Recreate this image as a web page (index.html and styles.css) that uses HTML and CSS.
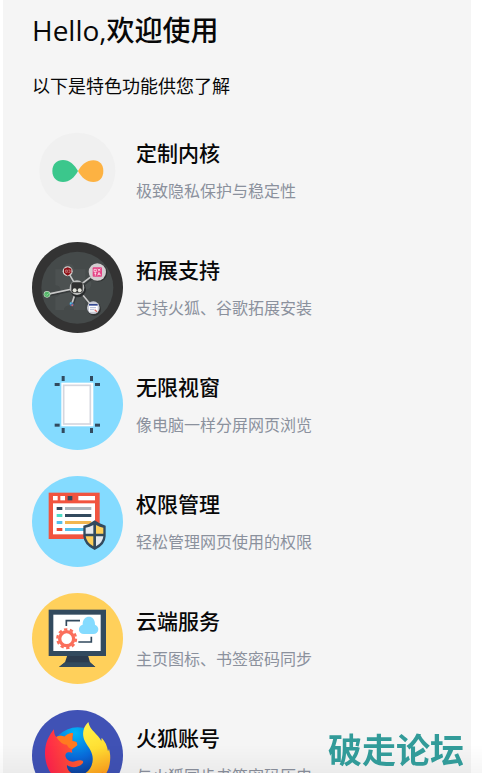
FILE: index.html
```html
<!DOCTYPE html>
<html lang="zh-CN">
<head>
  <meta charset="UTF-8">
  <meta name="viewport" content="width=device-width, initial-scale=1">
  <title>欢迎使用</title>
  <link rel="stylesheet" href="styles.css">
</head>
<body>

<main class="page">
  <h1>Hello,欢迎使用</h1>
  <p class="intro">以下是特色功能供您了解</p>

  <ul class="features">
    <!-- Kernel -->
    <li class="feature">
      <svg class="icon" viewBox="0 0 273 273" aria-hidden="true">
        <circle cx="136" cy="137" r="114" fill="#f0f0f0"/>
        <path d="M138 138C127 158 112 171 93 171C74 171 61 158 61 138C61 118 74 105 93 105C112 105 127 119 138 138Z" fill="#3bc78c"/>
        <path d="M138 138C149 119 164 106 184 106C203 106 214 119 214 138C214 158 203 171 184 171C164 171 149 158 138 138Z" fill="#fdb242"/>
      </svg>
      <div class="text">
        <h2>定制内核</h2>
        <p>极致隐私保护与稳定性</p>
      </div>
    </li>

    <!-- Extensions -->
    <li class="feature">
      <svg class="icon" viewBox="0 0 273 273" aria-hidden="true">
        <circle cx="136.500" cy="136.500" r="136.500" fill="#333"/>
        <circle cx="136" cy="137" r="108" fill="#454a4a"/>
        <path d="M70 82H94C94 60 126 60 126 82H160V113C184 104 184 147 160 141V204H126C126 186 96 186 96 204H70V165C92 165 92 130 70 130Z" fill="#4c5151"/>
        <g stroke="#292c2d" stroke-width="5" opacity=".6">
          <path d="M139 142L109 94M139 142L199 94M139 142L49 161M139 142L122 192M139 142L187 202"/>
        </g>
        <g stroke="#c8c8c8" stroke-width="5">
          <path d="M135 136L107 88M135 136L197 89M135 138L45 157M135 138L119 187M135 138L184 197"/>
        </g>
        <circle cx="138" cy="142" r="24" fill="#292c2d"/>
        <circle cx="135" cy="137" r="22" fill="#bfc0bf"/>
        <rect x="118" y="121" width="34" height="31" rx="5" fill="#303030"/>
        <circle cx="128" cy="145" r="6" fill="#e3e4dc"/>
        <circle cx="143" cy="145" r="6" fill="#e3e4dc"/>
        <circle cx="107" cy="88" r="15" fill="#d1cecd"/>
        <path d="M107 76L118 80V91Q116 97 107 101Q98 97 96 91V80Z" fill="#8e1016"/>
        <path d="M101 84V91H106V84ZM109 84H114V91H109" fill="none" stroke="#d9a0a0" stroke-width="2"/>
        <circle cx="199" cy="92" r="27" fill="#303333"/>
        <circle cx="196" cy="90" r="26" fill="#d3cdd0"/>
        <rect x="182" y="76" width="28" height="28" rx="3" fill="#e54385"/>
        <path d="M186 82H193V89H186V82M197 81L205 86M205 80L198 88M187 94H193M190 91V101M197 100L201 91L206 100M198 97H204" fill="none" stroke="#fff" stroke-width="2"/>
        <circle cx="45" cy="157" r="10" fill="#c3dcc5"/>
        <circle cx="45" cy="157" r="8" fill="#52b467"/>
        <path d="M41 157L44 160L50 154" fill="none" stroke="#a7deb2" stroke-width="2"/>
        <circle cx="119" cy="187" r="6" fill="#4a6ea6"/>
        <circle cx="116" cy="184" r="3" fill="#53c6dd"/>
        <circle cx="121" cy="190" r="3" fill="#c56b70"/>
        <circle cx="187" cy="201" r="20" fill="#303333"/>
        <circle cx="184" cy="197" r="19" fill="#c9cbd5"/>
        <rect x="171" y="186" width="26" height="23" fill="#fff"/>
        <path d="M171 186H197V191H171Z" fill="#344993"/>
        <path d="M174 197H192M174 203H187" stroke="#8792bd" stroke-width="2"/>
        <path d="M188 203L195 209" stroke="#df6a65" stroke-width="4"/>
      </svg>
      <div class="text">
        <h2>拓展支持</h2>
        <p>支持火狐、谷歌拓展安装</p>
      </div>
    </li>

    <!-- Windows -->
    <li class="feature">
      <svg class="icon" viewBox="0 0 273 273" aria-hidden="true">
        <circle cx="136.500" cy="136.500" r="136.500" fill="#84dbff"/>
        <g fill="#324a5e">
          <rect x="89" y="51" width="9" height="15"/>
          <rect x="174" y="51" width="9" height="15"/>
          <rect x="68" y="72" width="15" height="9"/>
          <rect x="189" y="72" width="15" height="9"/>
          <rect x="68" y="194" width="15" height="9"/>
          <rect x="189" y="194" width="15" height="9"/>
          <rect x="89" y="207" width="9" height="15"/>
          <rect x="174" y="207" width="9" height="15"/>
        </g>
        <rect x="88" y="71" width="96" height="131" fill="#fff"/>
        <rect x="95" y="79" width="80" height="116" fill="#fff" stroke="#d5d7df" stroke-width="5"/>
      </svg>
      <div class="text">
        <h2>无限视窗</h2>
        <p>像电脑一样分屏网页浏览</p>
      </div>
    </li>

    <!-- Permissions -->
    <li class="feature">
      <svg class="icon" viewBox="0 0 273 273" aria-hidden="true">
        <circle cx="136.500" cy="136.500" r="136.500" fill="#84dbff"/>
        <rect x="50" y="50" width="153" height="139" fill="#f1543f"/>
        <rect x="63" y="82" width="126" height="93" fill="#fff"/>
        <g fill="#fff">
          <rect x="63" y="60" width="14" height="13"/>
          <rect x="85" y="60" width="14" height="13"/>
          <rect x="139" y="60" width="50" height="13"/>
        </g>
        <rect x="107" y="60" width="14" height="13" fill="#324a5e"/>
        <rect x="74" y="93" width="17" height="9" fill="#324a5e"/>
        <rect x="99" y="93" width="79" height="9" fill="#acb3ba"/>
        <rect x="74" y="114" width="17" height="9" fill="#4cdbc4"/>
        <rect x="99" y="114" width="79" height="9" fill="#324a5e"/>
        <rect x="74" y="135" width="17" height="9" fill="#54c0eb"/>
        <rect x="99" y="135" width="79" height="9" fill="#f2b650"/>
        <rect x="74" y="156" width="17" height="9" fill="#e94b35"/>
        <rect x="99" y="156" width="79" height="9" fill="#54c0eb"/>
        <path d="M188 133Q202 144 221 149V181Q220 208 188 222Q156 208 154 181V149Q174 145 188 133Z" fill="#324a5e"/>
        <path d="M184 147V173H161V155Q173 153 184 147Z" fill="#e6e9ee"/>
        <path d="M192 147Q203 153 214 155V173H192Z" fill="#ffd05b"/>
        <path d="M161 181H184V211Q164 201 161 181Z" fill="#ffd05b"/>
        <path d="M192 181H214Q212 201 192 211Z" fill="#e6e9ee"/>
      </svg>
      <div class="text">
        <h2>权限管理</h2>
        <p>轻松管理网页使用的权限</p>
      </div>
    </li>

    <!-- Cloud -->
    <li class="feature">
      <svg class="icon" viewBox="0 0 273 273" aria-hidden="true">
        <circle cx="136.500" cy="136.500" r="136.500" fill="#ffd05b"/>
        <path d="M106 187H168L174 208L190 222H81L99 208Z" fill="#2b3b4e"/>
        <path d="M99 208H174L190 222H81Z" fill="#324a5e"/>
        <rect x="50" y="50" width="172" height="139" fill="#324a5e"/>
        <rect x="64" y="65" width="142" height="109" fill="#fff"/>
        <path d="M103 99V83H144M139 147H178V131" fill="none" stroke="#324a5e" stroke-width="5"/>
        <circle cx="104" cy="137" r="21" fill="none" stroke="#fb6e5b" stroke-width="10"/>
        <circle cx="104" cy="137" r="28" fill="none" stroke="#fb6e5b" stroke-width="7" stroke-dasharray="10 7.593"/>
        <path d="M156 123C137 123 136 99 152 95C151 64 190 63 189 95C204 100 202 123 184 123Z" fill="#84dbff"/>
      </svg>
      <div class="text">
        <h2>云端服务</h2>
        <p>主页图标、书签密码同步</p>
      </div>
    </li>

    <!-- Firefox account -->
    <li class="feature">
      <svg class="icon" viewBox="0 0 273 273" aria-hidden="true">
        <defs>
          <radialGradient id="globe" cx="45%" cy="10%" r="95%">
            <stop offset="0" stop-color="#00b7f8"/>
            <stop offset=".5" stop-color="#0968da"/>
            <stop offset="1" stop-color="#13256e"/>
          </radialGradient>
          <linearGradient id="fox" x1="0" y1=".3" x2="1" y2=".1">
            <stop offset="0" stop-color="#ff254c"/>
            <stop offset=".5" stop-color="#ff5931"/>
            <stop offset="1" stop-color="#ffa318"/>
          </linearGradient>
          <linearGradient id="tail" x1=".3" y1="0" x2=".5" y2="1">
            <stop offset="0" stop-color="#fff44b"/>
            <stop offset=".45" stop-color="#ffdf33"/>
            <stop offset="1" stop-color="#ff8a16"/>
          </linearGradient>
        </defs>
        <circle cx="136.500" cy="136.500" r="136.500" fill="#4052b5"/>
        <circle cx="137" cy="134" r="82" fill="url(#globe)"/>
        <path d="M169 36C151 53 149 77 160 96C171 115 184 128 182 151C180 182 155 196 130 203L142 231C190 233 227 201 233 162C236 143 235 131 231 117L228 124C226 107 219 94 209 83L208 93C198 72 174 62 169 36Z" fill="url(#tail)"/>
        <path d="M66 58C51 76 39 98 39 130C39 187 80 231 136 231C176 231 205 211 215 184C190 202 154 209 125 193C111 186 103 175 105 165C116 174 137 174 150 162C157 156 153 150 143 151C130 152 123 160 109 151C98 144 97 130 108 127C114 126 119 127 121 129C119 121 120 117 125 114L136 105L133 96L121 93L123 69C112 70 103 75 97 80C88 76 80 77 73 81C67 76 66 67 66 58Z" fill="url(#fox)"/>
        <path d="M73 81Q86 74 97 80Q107 70 123 69Q118 82 121 93L133 96L136 105Q127 113 120 117Q109 115 105 104Q88 105 73 81Z" fill="#ff7a20"/>
      </svg>
      <div class="text">
        <h2>火狐账号</h2>
        <p>与火狐同步书签密码历史</p>
      </div>
    </li>
  </ul>
</main>

<div class="watermark">破走论坛</div>

</body>
</html>
```
FILE: styles.css
```css
:root {
  --bg: #f5f5f5;
  --text: #080808;
  --muted: #8b919d;
  --brand: #329b99;
}

* {
  box-sizing: border-box;
}

body {
  margin: 0;
  height: 100vh;
  overflow: hidden;
  background: #fff;
  color: var(--text);
  font-family: "Open Sans", "Noto Sans CJK SC", sans-serif;
}

/* fade along the bottom edge of the screen */
body::after {
  content: "";
  position: fixed;
  left: 0;
  right: 0;
  bottom: 0;
  height: 28px;
  background: linear-gradient(rgba(0, 0, 0, 0), rgba(0, 0, 0, 0.04));
}

h1,
h2,
p,
ul {
  margin: 0;
  padding: 0;
}

.page {
  height: 100%;
  margin: 0 11px 0 3px;
  padding: 10px 29px 0;
  overflow: hidden;
  background: var(--bg);
}

h1 {
  font-size: 28px;
  font-weight: 500;
  line-height: 40px;
}

.intro {
  margin-top: 22px;
  font-size: 18px;
  line-height: 28px;
}

.features {
  display: flex;
  flex-direction: column;
  gap: 26px;
  margin-top: 25px;
  list-style: none;
}

.feature {
  display: flex;
  gap: 13px;
}

.icon {
  flex: none;
  width: 91px;
  height: 91px;
}

.text {
  display: flex;
  flex-direction: column;
  gap: 8px;
  padding-top: 13px;
}

h2 {
  font-size: 21px;
  font-weight: 500;
  line-height: 30px;
}

.text p {
  color: var(--muted);
  font-size: 16px;
  line-height: 30px;
}

.watermark {
  position: fixed;
  right: 18px;
  bottom: 0;
  z-index: 1;
  color: var(--brand);
  font-family: "Noto Sans CJK SC", sans-serif;
  font-size: 34px;
  font-weight: 700;
  line-height: 48px;
}
```
